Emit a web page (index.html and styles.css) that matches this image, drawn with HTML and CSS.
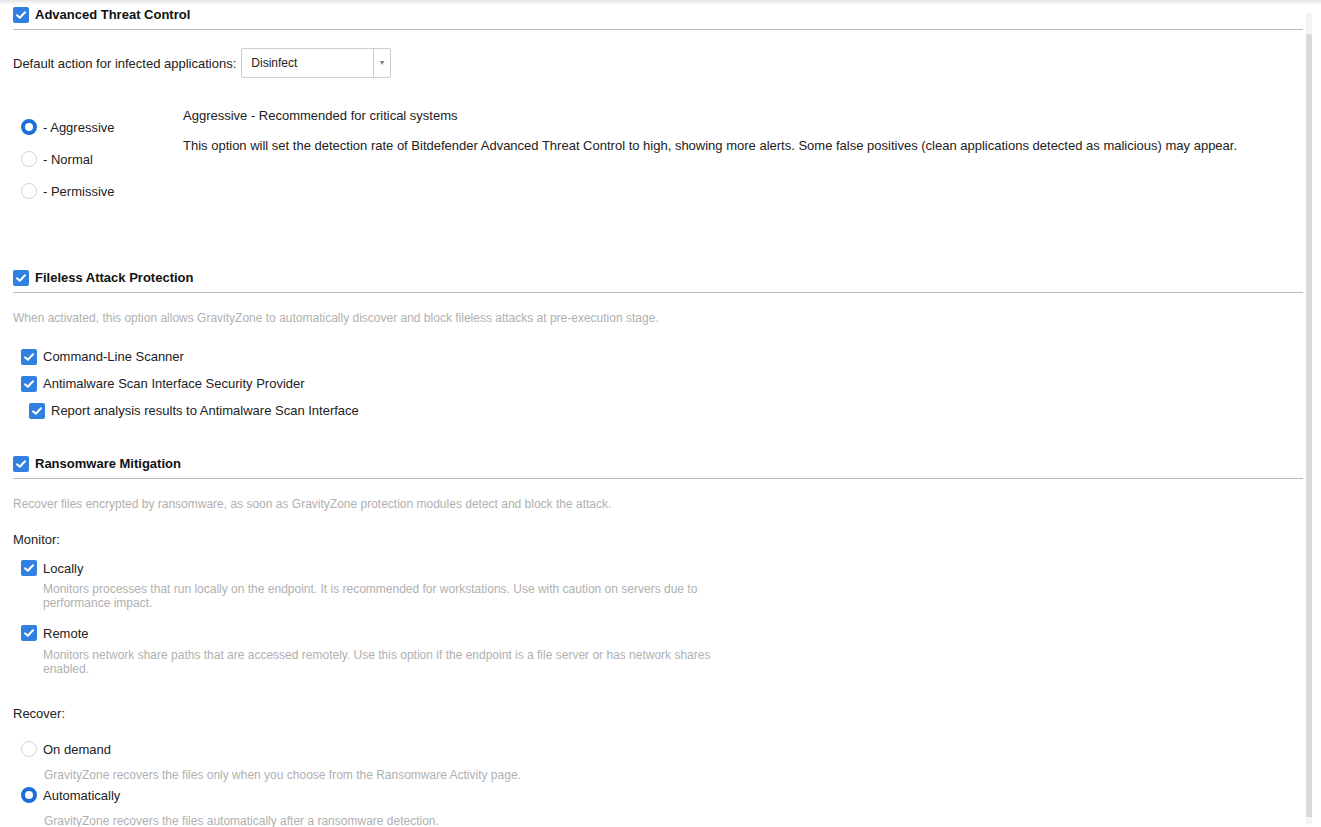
FILE: index.html
```html
<!DOCTYPE html>
<html lang="en">
<head>
    <meta charset="UTF-8">
    <title>Antimalware - On-Execute</title>
    <link rel="stylesheet" href="styles.css">
</head>
<body>
    <div class="top-shadow"></div>
    <div class="scrollbar"><div class="thumb"></div></div>

    <div class="page">
        <!-- Advanced Threat Control -->
        <div class="sec-head first">
            <span class="chk"><svg viewBox="0 0 16 16"><rect width="16" height="16" rx="2"/><path d="M4 8.3 L6.8 10.8 L12 5.2"/></svg></span>
            <span class="sec-title">Advanced Threat Control</span>
        </div>

        <div class="action-row">
            <span>Default action for infected applications:</span>
            <div class="select">
                <span class="select-val">Disinfect</span>
                <span class="select-arrow">&#9662;</span>
            </div>
        </div>

        <div class="level">
            <div class="level-opts">
                <div class="radio-row"><span class="radio on"></span>- Aggressive</div>
                <div class="radio-row"><span class="radio"></span>- Normal</div>
                <div class="radio-row"><span class="radio"></span>- Permissive</div>
            </div>
            <div class="level-info">
                <div>Aggressive - Recommended for critical systems</div>
                <div class="level-desc">This option will set the detection rate of Bitdefender Advanced Threat Control to high, showing more alerts. Some false positives (clean applications detected as malicious) may appear.</div>
            </div>
        </div>

        <!-- Fileless Attack Protection -->
        <div class="sec-head fileless">
            <span class="chk"><svg viewBox="0 0 16 16"><rect width="16" height="16" rx="2"/><path d="M4 8.3 L6.8 10.8 L12 5.2"/></svg></span>
            <span class="sec-title">Fileless Attack Protection</span>
        </div>
        <p class="hint">When activated, this option allows GravityZone to automatically discover and block fileless attacks at pre-execution stage.</p>

        <div class="chk-list">
            <div class="chk-row"><span class="chk"><svg viewBox="0 0 16 16"><rect width="16" height="16" rx="2"/><path d="M4 8.3 L6.8 10.8 L12 5.2"/></svg></span>Command-Line Scanner</div>
            <div class="chk-row"><span class="chk"><svg viewBox="0 0 16 16"><rect width="16" height="16" rx="2"/><path d="M4 8.3 L6.8 10.8 L12 5.2"/></svg></span>Antimalware Scan Interface Security Provider</div>
            <div class="chk-row sub"><span class="chk"><svg viewBox="0 0 16 16"><rect width="16" height="16" rx="2"/><path d="M4 8.3 L6.8 10.8 L12 5.2"/></svg></span>Report analysis results to Antimalware Scan Interface</div>
        </div>

        <!-- Ransomware Mitigation -->
        <div class="sec-head ransom">
            <span class="chk"><svg viewBox="0 0 16 16"><rect width="16" height="16" rx="2"/><path d="M4 8.3 L6.8 10.8 L12 5.2"/></svg></span>
            <span class="sec-title">Ransomware Mitigation</span>
        </div>
        <p class="hint">Recover files encrypted by ransomware, as soon as GravityZone protection modules detect and block the attack.</p>

        <div class="group-label monitor">Monitor:</div>
        <div class="opt locally"><span class="chk"><svg viewBox="0 0 16 16"><rect width="16" height="16" rx="2"/><path d="M4 8.3 L6.8 10.8 L12 5.2"/></svg></span>Locally</div>
        <p class="opt-desc">Monitors processes that run locally on the endpoint. It is recommended for workstations. Use with caution on servers due to performance impact.</p>
        <div class="opt remote"><span class="chk"><svg viewBox="0 0 16 16"><rect width="16" height="16" rx="2"/><path d="M4 8.3 L6.8 10.8 L12 5.2"/></svg></span>Remote</div>
        <p class="opt-desc">Monitors network share paths that are accessed remotely. Use this option if the endpoint is a file server or has network shares enabled.</p>

        <div class="group-label recover">Recover:</div>
        <div class="opt ondemand"><span class="radio"></span>On demand</div>
        <p class="opt-desc radio-desc">GravityZone recovers the files only when you choose from the Ransomware Activity page.</p>
        <div class="opt auto"><span class="radio on"></span>Automatically</div>
        <p class="opt-desc radio-desc">GravityZone recovers the files automatically after a ransomware detection.</p>
    </div>
</body>
</html>
```

FILE: styles.css
```css
body { margin: 0; background: #fff; font-family: "Liberation Sans", Arial, sans-serif; font-size: 13px; color: #222; overflow: hidden; }
.top-shadow { position: fixed; top: 0; left: 0; right: 0; height: 5px; background: linear-gradient(#e6e6e6, rgba(255,255,255,0)); }
.scrollbar { position: fixed; top: 13px; bottom: 2px; right: 9px; width: 6px; background: #f3f3f3; border-radius: 3px; }
.scrollbar .thumb { position: absolute; top: 21px; bottom: 8px; left: 0; right: 0; background: #d9d9d9; }

.page { padding: 0 18px 0 13px; }

.chk { display: inline-block; width: 16px; height: 16px; flex: none; }
.chk svg { display: block; width: 16px; height: 16px; }
.chk rect { fill: #2f80e0; }
.chk path { fill: none; stroke: #fff; stroke-width: 2; stroke-linecap: round; stroke-linejoin: round; }

.radio { display: inline-block; width: 16px; height: 16px; box-sizing: border-box; border: 1px solid #d6d6d6; border-radius: 50%; flex: none; background: #fff; }
.radio.on { border: 4px solid #1a70d6; }

.sec-head { display: flex; align-items: center; gap: 6px; padding-bottom: 6px; border-bottom: 1px solid #bbb; }
.sec-head.first { margin-top: 7px; }
.sec-head.fileless { margin-top: 63px; }
.sec-head.ransom { margin-top: 32px; }
.sec-title { font-weight: bold; color: #111; line-height: 16px; }

.action-row { display: flex; align-items: center; gap: 5px; margin-top: 18px; }
.select { display: flex; width: 150px; height: 30px; box-sizing: border-box; border: 1px solid #ccc; border-radius: 2px; font-size: 12px; }
.select-val { flex: 1; padding-left: 9px; line-height: 28px; }
.select-arrow { width: 16px; border-left: 1px solid #ccc; text-align: center; line-height: 28px; font-size: 8px; color: #777; }

.level { display: flex; margin-top: 30px; }
.level-opts { width: 170px; padding: 3px 0 0 8px; box-sizing: border-box; flex: none; }
.radio-row { display: flex; align-items: center; gap: 6px; height: 32px; }
.level-info { line-height: 16px; }
.level-desc { margin-top: 14px; }

.hint { margin: 17px 0 0; font-size: 12px; line-height: 16px; color: #b0b0b0; }

.chk-list { margin-top: 17px; padding-left: 8px; }
.chk-row { display: flex; align-items: center; gap: 6px; height: 27px; }
.chk-row.sub { padding-left: 8px; }

.group-label { line-height: 16px; }
.group-label.monitor { margin-top: 20px; }
.group-label.recover { margin-top: 30px; }

.opt { display: flex; align-items: center; gap: 6px; height: 16px; margin-left: 8px; }
.opt.locally { margin-top: 12px; }
.opt.remote { margin-top: 15px; }
.opt.ondemand { margin-top: 19px; }
.opt.auto { margin-top: 5px; }
.opt-desc { margin: 6px 0 0 30px; max-width: 680px; font-size: 12px; line-height: 14px; color: #b0b0b0; }
.remote + .opt-desc { margin-top: 7px; }
.radio-desc { margin-top: 11px; margin-left: 31px; }
```
